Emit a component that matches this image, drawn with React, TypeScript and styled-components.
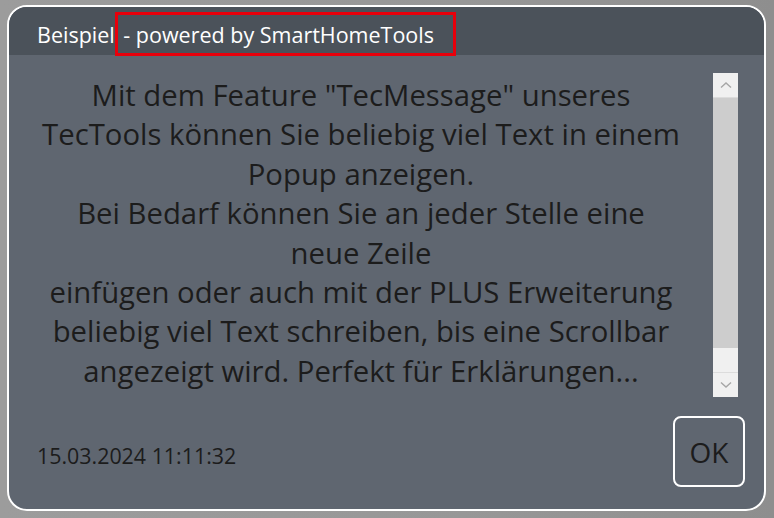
import styled, { createGlobalStyle } from "styled-components"

const GlobalStyle = createGlobalStyle`
    html, body {
        margin: 0;
        padding: 0;
        background: #979797;
    }
    body {
        font-family: "Open Sans", "Noto Sans", sans-serif;
    }
`

const Page = styled.div`
    width: 774px;
    height: 518px;
    box-sizing: border-box;
    padding: 5px 8px 7px 7px;
    background: linear-gradient(90deg, #9c9c9c 0%, #979797 60%, #8e8e8e 100%);
`

const Card = styled.div`
    height: 100%;
    box-sizing: border-box;
    border: 2px solid #ffffff;
    border-radius: 20px;
    background: #5f6670;
    overflow: hidden;
    display: flex;
    flex-direction: column;
`

const Header = styled.div`
    height: 48px;
    flex: none;
    box-sizing: border-box;
    background: #4b525a;
    display: flex;
    align-items: flex-start;
    padding: 5px 0 0 28px;
    color: #ffffff;
    font-size: 21.5px;
    white-space: pre;
`

const TitleText = styled.span`
    height: 44px;
    display: flex;
    align-items: center;
`

const Highlight = styled.span`
    display: flex;
    align-items: center;
    height: 44px;
    box-sizing: border-box;
    border: 3px solid #e8000b;
    padding: 0 19px 0 0;
`

const Content = styled.div`
    flex: 1;
    display: flex;
    padding: 18px 26px 0 0;
    min-height: 0;
`

const Message = styled.p`
    flex: 1;
    margin: 3px 0 0 0;
    text-align: center;
    color: #1c1c1c;
    font-size: 29.3px;
    line-height: 39.4px;
    white-space: nowrap;
`

const ScrollBar = styled.div`
    width: 25px;
    height: 324px;
    display: flex;
    flex-direction: column;
    background: #f0f0f0;
    flex: none;
`

const ScrollButton = styled.div<{ $down?: boolean }>`
    height: 24px;
    display: flex;
    align-items: center;
    justify-content: center;
    background: #f0f0f0;
    border: 1px solid #dcdcdc;
    border-width: ${p => (p.$down ? "1px 0 0 0" : "0 0 1px 0")};
`

const Thumb = styled.div`
    height: 250px;
    background: #cdcdcd;
`

const Track = styled.div`
    flex: 1;
`

const Footer = styled.div`
    flex: none;
    display: flex;
    align-items: center;
    justify-content: space-between;
    padding: 0 19px 22px 28px;
`

const DateLabel = styled.span`
    color: #1c1c1c;
    font-size: 21.4px;
    margin-top: 8px;
`

const OkButton = styled.button`
    width: 72px;
    height: 71px;
    box-sizing: border-box;
    border: 2px solid #ffffff;
    border-radius: 8px;
    background: transparent;
    color: #1c1c1c;
    font-family: inherit;
    font-size: 28px;
    padding: 0;
`

const Chevron = ({ down }: { down?: boolean }) => (
    <svg width="12" height="8" viewBox="0 0 12 8">
        <path
            d={down ? "M1 1.5 L6 6 L11 1.5" : "M1 6.5 L6 2 L11 6.5"}
            fill="none"
            stroke="#a6a6a6"
            strokeWidth="1.4"
        />
    </svg>
)

const App = () => {
    return (
        <>
            <GlobalStyle />
            <Page>
                <Card>
                    <Header>
                        <TitleText>Beispiel</TitleText>
                        <Highlight> - powered by SmartHomeTools</Highlight>
                    </Header>
                    <Content>
                        <Message>
                            Mit dem Feature "TecMessage" unseres<br />
                            TecTools können Sie beliebig viel Text in einem<br />
                            Popup anzeigen.<br />
                            Bei Bedarf können Sie an jeder Stelle eine<br />
                            neue Zeile<br />
                            einfügen oder auch mit der PLUS Erweiterung<br />
                            beliebig viel Text schreiben, bis eine Scrollbar<br />
                            angezeigt wird. Perfekt für Erklärungen...
                        </Message>
                        <ScrollBar>
                            <ScrollButton><Chevron /></ScrollButton>
                            <Thumb />
                            <Track />
                            <ScrollButton $down><Chevron down /></ScrollButton>
                        </ScrollBar>
                    </Content>
                    <Footer>
                        <DateLabel>15.03.2024 11:11:32</DateLabel>
                        <OkButton>OK</OkButton>
                    </Footer>
                </Card>
            </Page>
        </>
    )
}

export default App
